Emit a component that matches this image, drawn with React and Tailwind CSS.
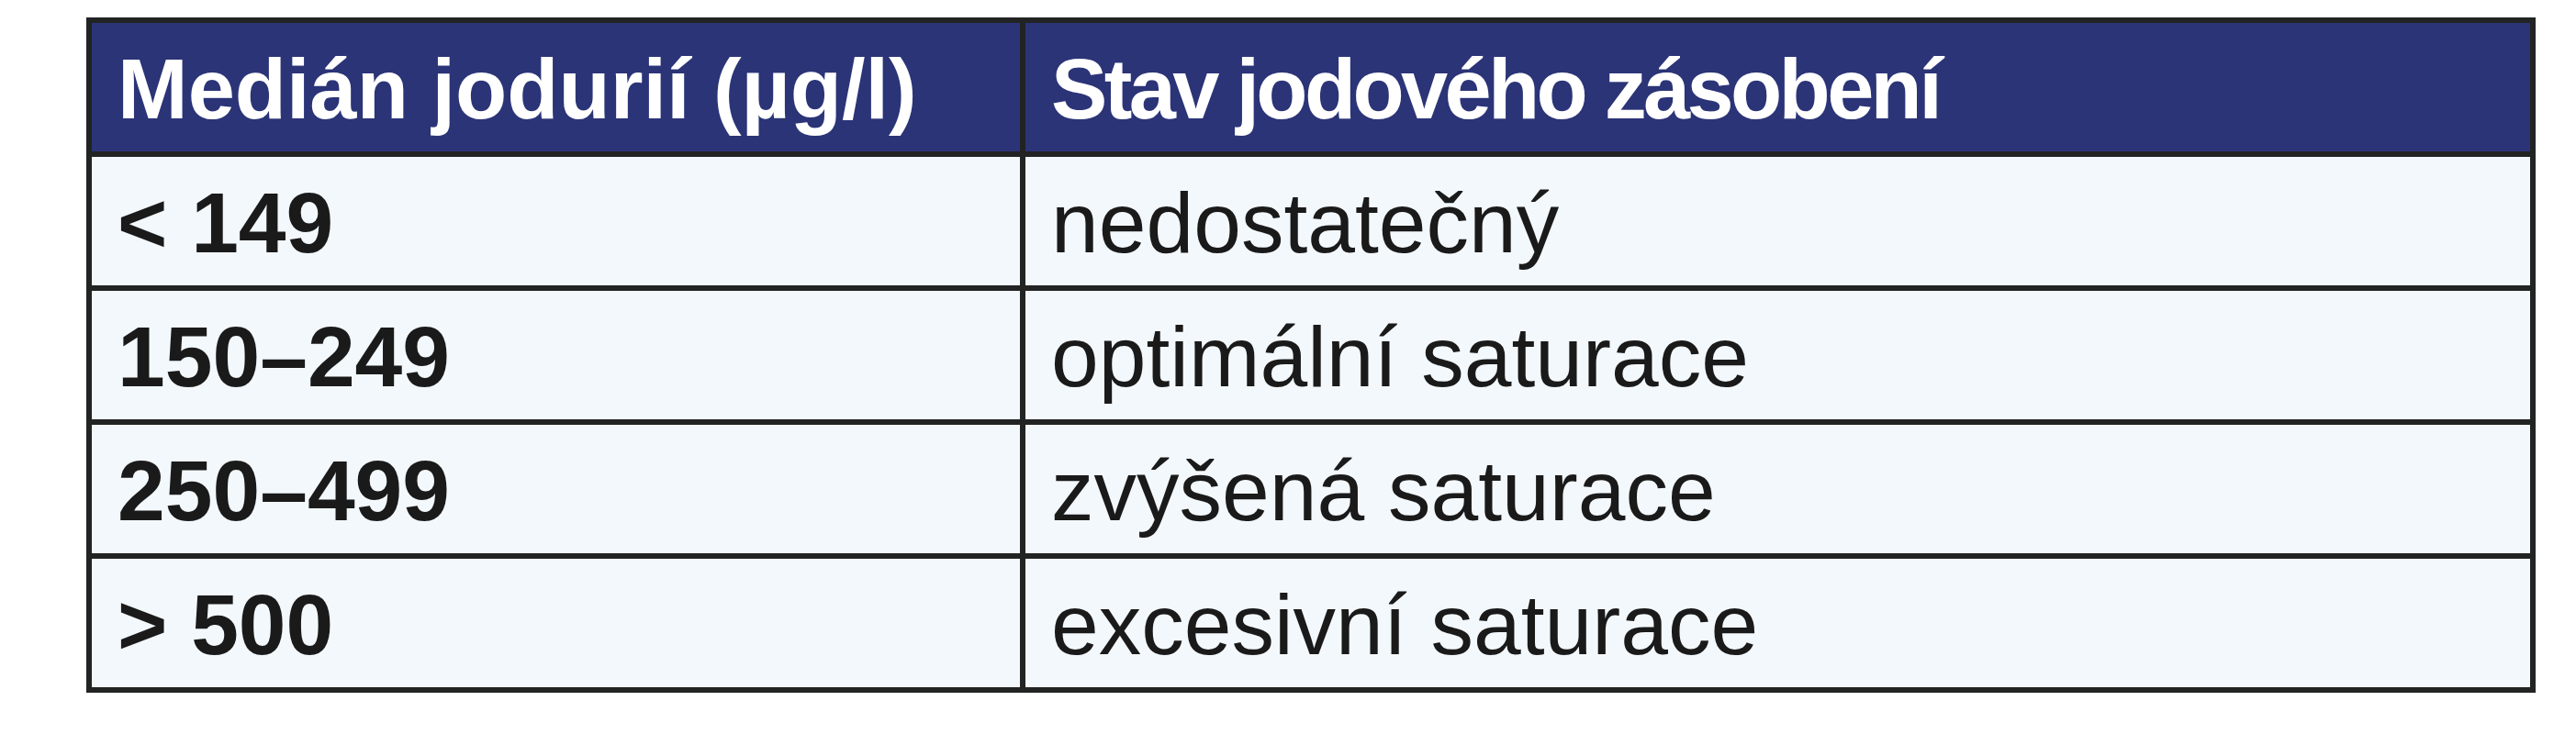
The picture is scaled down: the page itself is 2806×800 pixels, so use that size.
const rows = [
  ['< 149', 'nedostatečný'],
  ['150–249', 'optimální saturace'],
  ['250–499', 'zvýšená saturace'],
  ['> 500', 'excesivní saturace'],
]

function App() {
  return (
    <div className="w-[2806px] h-[800px] bg-white pt-[19px] pl-[94px] font-['Liberation_Sans',Arial,sans-serif]">
      <div className="w-[2668px] border-[6px] border-[#222323]">
        <div className="flex h-[140px] bg-[#2b3477] text-white font-bold text-[92px] leading-none">
          <div className="w-[1017px] border-r-[6px] border-[#222323] flex items-center pl-[28px] pt-[4px]">
            Medián jodurií (µg/l)
          </div>
          <div className="flex-1 flex items-center pl-[28px] pt-[4px] tracking-[-0.04em]">
            Stav jodového zásobení
          </div>
        </div>
        {rows.map(([value, state]) => (
          <div key={value} className="flex h-[146px] border-t-[6px] border-[#222323] bg-[#f3f8fc] text-[#1a1a1a] text-[93px] leading-none">
            <div className="w-[1017px] border-r-[6px] border-[#222323] flex items-center pl-[28px] pt-[4px] font-bold">
              {value}
            </div>
            <div className="flex-1 flex items-center pl-[28px] pt-[4px]">
              {state}
            </div>
          </div>
        ))}
      </div>
    </div>
  )
}

App.displayName = "App"

export default App
